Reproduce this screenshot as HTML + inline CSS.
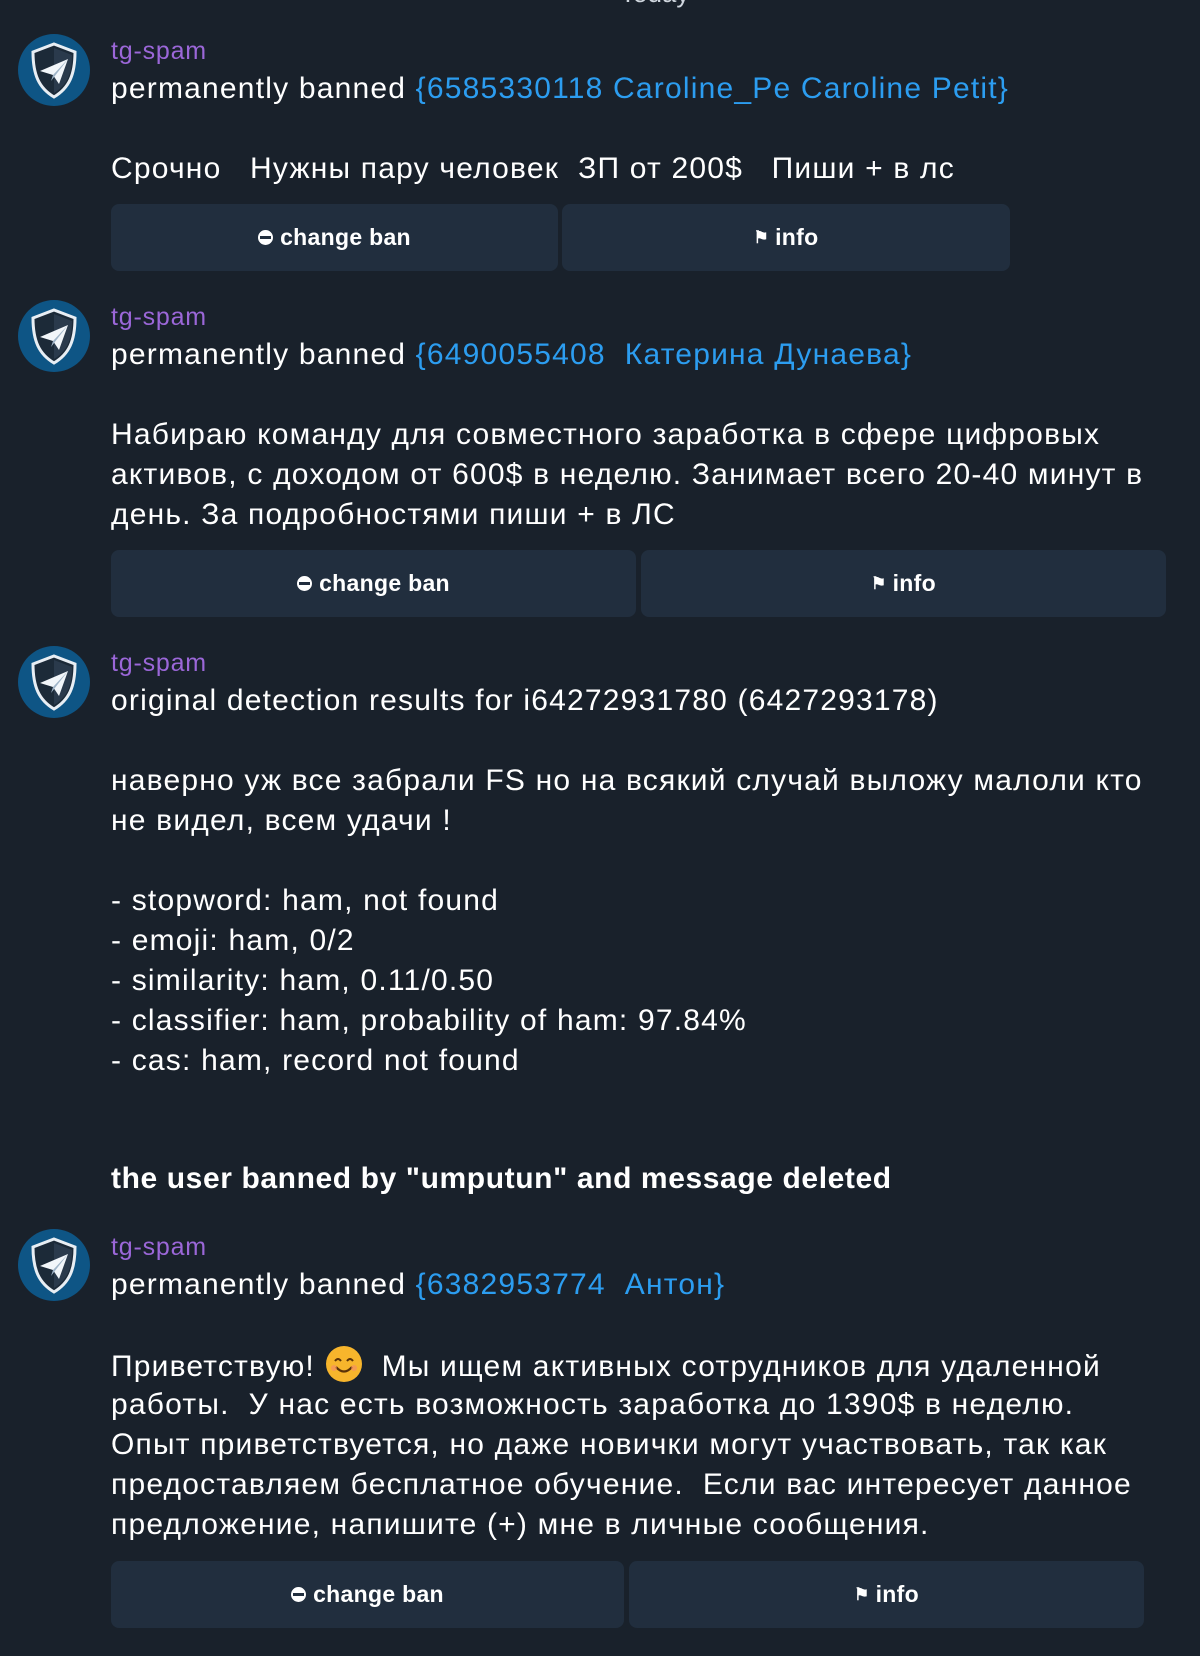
<!DOCTYPE html>
<html><head><meta charset="utf-8"><style>
html,body{margin:0;padding:0;background:#19212b;width:1200px;height:1656px;overflow:hidden}
body{position:relative;font-family:"Liberation Sans","Noto Sans CJK SC",sans-serif;color:#fff}
.t{position:absolute;left:111px;font-size:30px;letter-spacing:1.2px;line-height:40px;white-space:nowrap;margin-top:2px}
.n{position:absolute;left:111px;font-size:25px;letter-spacing:0.8px;color:#9b67d8;line-height:30px}
.l{color:#2c9df0}
.b{position:absolute;height:67px;background:#212e3e;border-radius:8px;color:#fff;font-weight:bold;font-size:23px;letter-spacing:0.3px;display:flex;align-items:center;justify-content:center}
.av{position:absolute;left:18px;width:72px;height:72px}
.dot{display:inline-block;width:15px;height:15px;border-radius:50%;background:#fff;position:relative;margin-right:7px;vertical-align:-1px}
.dot:after{content:"";position:absolute;left:2px;right:2px;top:6px;height:3px;background:#212e3e}
.fl{font-size:17px;margin-right:6px}
</style></head><body>
<svg width="0" height="0" style="position:absolute"><defs>
<symbol id="av" viewBox="0 0 72 72">
<circle cx="36" cy="36" r="36" fill="#0e5585"/>
<path d="M36 10 L57 18 C57 41 51 54 36 63 C21 54 15 41 15 18 Z" fill="#1c2a38" stroke="#e8eef4" stroke-width="3"/>
<path d="M36 14 L54 21 C54 40 49 51 36 59 Z" fill="#2a3a4c"/>
<path d="M22 37 L50 25 L41 50 L35 41 Z" fill="#f2f6fa"/>
<path d="M35 41 L50 25 L33 47 Z" fill="#9fb4c8"/>
</symbol></defs></svg>

<div style="position:absolute;left:620px;top:-22px;font-size:26px;color:#cfd6de">Today</div>

<svg class="av" style="top:34px"><use href="#av"/></svg>
<div class="n" style="top:36px">tg-spam</div>
<div class="t" style="top:67px">permanently banned <span class="l">{6585330118 Caroline_Pe Caroline Petit}</span></div>
<div class="t" style="top:147px">Срочно &nbsp; Нужны пару человек &nbsp;ЗП от 200$ &nbsp; Пиши + в лс</div>
<div class="b" style="left:111px;width:447px;top:204px"><span class="dot"></span>change ban</div>
<div class="b" style="left:562px;width:448px;top:204px"><span class="fl">⚑</span>info</div>

<svg class="av" style="top:300px"><use href="#av"/></svg>
<div class="n" style="top:302px">tg-spam</div>
<div class="t" style="top:333px">permanently banned <span class="l">{6490055408 &nbsp;Катерина Дунаева}</span></div>
<div class="t" style="top:413px">Набираю команду для совместного заработка в сфере цифровых</div>
<div class="t" style="top:453px">активов, с доходом от 600$ в неделю. Занимает всего 20-40 минут в</div>
<div class="t" style="top:493px">день. За подробностями пиши + в ЛС</div>
<div class="b" style="left:111px;width:525px;top:550px"><span class="dot"></span>change ban</div>
<div class="b" style="left:641px;width:525px;top:550px"><span class="fl">⚑</span>info</div>

<svg class="av" style="top:646px"><use href="#av"/></svg>
<div class="n" style="top:648px">tg-spam</div>
<div class="t" style="top:679px">original detection results for i64272931780 (6427293178)</div>
<div class="t" style="top:759px">наверно уж все забрали FS но на всякий случай выложу малоли кто</div>
<div class="t" style="top:799px">не видел, всем удачи !</div>
<div class="t" style="top:879px">- stopword: ham, not found</div>
<div class="t" style="top:919px">- emoji: ham, 0/2</div>
<div class="t" style="top:959px">- similarity: ham, 0.11/0.50</div>
<div class="t" style="top:999px">- classifier: ham, probability of ham: 97.84%</div>
<div class="t" style="top:1039px">- cas: ham, record not found</div>
<div class="t" style="top:1157px;font-weight:bold;letter-spacing:0.6px">the user banned by "umputun" and message deleted</div>

<svg class="av" style="top:1229px"><use href="#av"/></svg>
<div class="n" style="top:1232px">tg-spam</div>
<div class="t" style="top:1263px">permanently banned <span class="l">{6382953774 &nbsp;Антон}</span></div>
<div class="t" style="top:1343px">Приветствую! <svg width="38" height="38" viewBox="0 0 38 38" style="vertical-align:-7px"><circle cx="19" cy="19" r="18" fill="#f7b52c"/><path d="M10 16 Q13 12 16 16 M22 16 Q25 12 28 16" stroke="#5a3208" stroke-width="2" fill="none"/><path d="M11 22 Q19 31 27 22" stroke="#5a3208" stroke-width="2.2" fill="none"/><circle cx="9" cy="23" r="3" fill="#f58a6a" opacity=".6"/><circle cx="29" cy="23" r="3" fill="#f58a6a" opacity=".6"/></svg> &nbsp;Мы ищем активных сотрудников для удаленной</div>
<div class="t" style="top:1383px">работы. &nbsp;У нас есть возможность заработка до 1390$ в неделю.</div>
<div class="t" style="top:1423px">Опыт приветствуется, но даже новички могут участвовать, так как</div>
<div class="t" style="top:1463px">предоставляем бесплатное обучение. &nbsp;Если вас интересует данное</div>
<div class="t" style="top:1503px">предложение, напишите (+) мне в личные сообщения.</div>
<div class="b" style="left:111px;width:513px;top:1561px"><span class="dot"></span>change ban</div>
<div class="b" style="left:629px;width:515px;top:1561px"><span class="fl">⚑</span>info</div>
</body></html>
